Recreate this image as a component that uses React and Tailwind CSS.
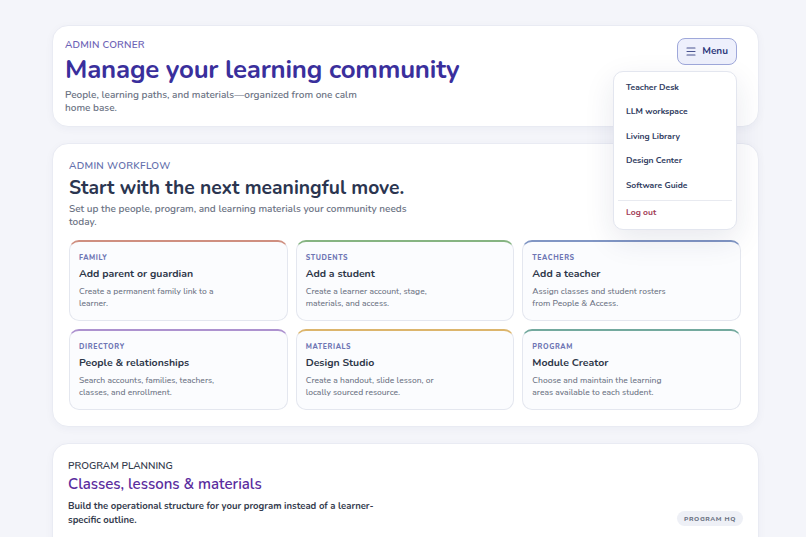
import React from "react";

const cards = [
  { label: "FAMILY", title: "Add parent or guardian", desc: "Create a permanent family link to a learner.", color: "border-t-[#cf8f80]" },
  { label: "STUDENTS", title: "Add a student", desc: "Create a learner account, stage, materials, and access.", color: "border-t-[#86b482]" },
  { label: "TEACHERS", title: "Add a teacher", desc: "Assign classes and student rosters from People & Access.", color: "border-t-[#8196c4]" },
  { label: "DIRECTORY", title: "People & relationships", desc: "Search accounts, families, teachers, classes, and enrollment.", color: "border-t-[#ad92cf]" },
  { label: "MATERIALS", title: "Design Studio", desc: "Create a handout, slide lesson, or locally sourced resource.", color: "border-t-[#dcb56c]" },
  { label: "PROGRAM", title: "Module Creator", desc: "Choose and maintain the learning areas available to each student.", color: "border-t-[#73a99e]" },
];

const menu = ["Teacher Desk", "LLM workspace", "Living Library", "Design Center", "Software Guide"];

export default function App() {
  return (
    <div
      className="min-h-screen bg-[#f4f5fa] pt-[25px] pl-[52px] pr-[47px] overflow-hidden"
      style={{ fontFamily: "'Nunito', 'Lato', 'Noto Sans', sans-serif", height: 537 }}
    >
      <div className="flex flex-col gap-[16px]">
        {/* Panel 1 */}
        <div className="relative z-10 rounded-[16px] bg-white border border-[#e9ebf3] shadow-[0_2px_8px_rgba(30,40,90,0.04)] h-[102px] pl-[12px] pr-[21px] pt-[13px] flex justify-between">
          <div className="flex flex-col">
            <div className="text-[10px] leading-[12px] font-semibold text-[#6d62b6] tracking-[0.2px]">ADMIN CORNER</div>
            <div className="text-[25.8px] leading-[30px] font-bold text-[#3a2f9c] tracking-[-0.2px] mt-[4px]">Manage your learning community</div>
            <div className="text-[10px] leading-[13px] font-semibold text-[#6b7283] w-[300px] mt-[4px]">
              People, learning paths, and materials—organized from one calm home base.
            </div>
          </div>
          <div className="relative">
            <button className="flex items-center gap-[6px] h-[27px] pl-[8px] pr-[8px] mt-[-1px] rounded-[8px] bg-[#eef0fc] border border-[#9fa8da] text-[10px] font-bold text-[#2f3a7c]">
              <svg width="10" height="9" viewBox="0 0 10 9" fill="none" stroke="#4a5490" strokeWidth="1.1" strokeLinecap="round">
                <path d="M1 1h8M1 4.5h8M1 8h8" />
              </svg>
              Menu
            </button>
            <div className="absolute right-0 top-[32px] w-[124px] h-[159px] rounded-[10px] bg-white border border-[#e3e6ef] shadow-[0_10px_30px_rgba(30,40,90,0.10)] px-[4px] pt-[3px]">
              <div className="flex flex-col">
                {menu.map((m) => (
                  <div key={m} className="h-[24.5px] flex items-center px-[8px] text-[8.5px] font-bold text-[#2f3b60]">{m}</div>
                ))}
              </div>
              <div className="border-t border-[#e8eaf0] mt-[2px]" />
              <div className="h-[23px] flex items-center px-[8px] text-[8.5px] font-bold text-[#a03a55]">Log out</div>
            </div>
          </div>
        </div>

        {/* Panel 2 */}
        <div className="rounded-[16px] bg-white border border-[#e9ebf3] shadow-[0_2px_8px_rgba(30,40,90,0.04)] h-[284px] pl-[16px] pr-[17px] pt-[16px]">
          <div className="text-[10px] leading-[13px] font-semibold text-[#6470ad] tracking-[0.3px]">ADMIN WORKFLOW</div>
          <div className="text-[19.3px] leading-[26px] font-bold text-[#2b3550] mt-[2px]">Start with the next meaningful move.</div>
          <div className="text-[10px] leading-[13px] font-semibold text-[#6b7283] w-[345px] mt-[2px]">
            Set up the people, program, and learning materials your community needs today.
          </div>
          <div className="grid grid-cols-3 gap-[8px] mt-[11px]">
            {cards.map((c) => (
              <div key={c.label} className={`h-[81px] rounded-[10px] border border-[#e4e7ef] border-t-2 ${c.color} bg-[#fbfcfe] px-[9px] pt-[11px]`}>
                <div className="text-[7px] leading-[10px] font-extrabold tracking-[0.6px] text-[#6e76b4]">{c.label}</div>
                <div className="text-[10.5px] leading-[14px] font-bold text-[#2d3648] mt-[4px]">{c.title}</div>
                <div className="text-[8.5px] leading-[11.5px] font-medium text-[#6b7283] w-[140px] mt-[5px]">{c.desc}</div>
              </div>
            ))}
          </div>
        </div>

        {/* Panel 3 */}
        <div className="rounded-[16px] bg-white border border-[#e9ebf3] shadow-[0_2px_8px_rgba(30,40,90,0.04)] h-[140px] pl-[15px] pr-[15px] pt-[16px]">
          <div className="text-[10px] leading-[13px] font-semibold text-[#343b4d]">PROGRAM PLANNING</div>
          <div className="text-[15px] leading-[20px] font-semibold text-[#5a2c9e] mt-[1px]">Classes, lessons &amp; materials</div>
          <div className="flex items-end justify-between">
            <div className="text-[9.5px] leading-[14px] font-bold text-[#343b4d] w-[320px] mt-[5px]">
              Build the operational structure for your program instead of a learner-specific outline.
            </div>
            <div className="h-[15px] px-[7px] rounded-full bg-[#eef0f6] flex items-center text-[6.5px] font-extrabold tracking-[0.6px] text-[#6b7283] mb-[1px]">PROGRAM HQ</div>
          </div>
          <div className="border-t border-[#dfe2ea] mt-[12px]" />
        </div>
      </div>
    </div>
  );
}
